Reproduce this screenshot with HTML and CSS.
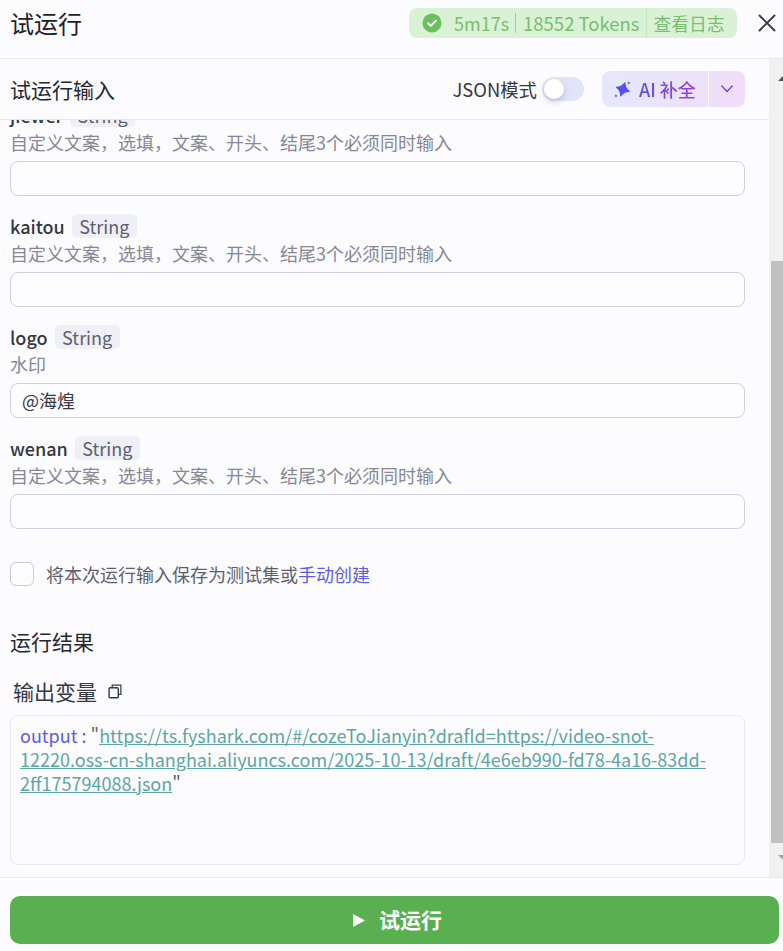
FILE: index.html
```html
<!DOCTYPE html>
<html lang="zh">
<head>
<meta charset="utf-8">
<title>试运行</title>
<link rel="stylesheet" href="styles.css">
</head>
<body>
<div class="panel">
  <header class="top">
    <h1 class="title">试运行</h1>
    <div class="status">
      <svg class="ok" viewBox="0 0 20 20" width="20" height="20"><circle cx="10" cy="10" r="9.500" fill="#6cbf5f"/><path d="M6 10.300l2.800 2.600L14 7.600" fill="none" stroke="#fff" stroke-width="2" stroke-linecap="round" stroke-linejoin="round"/></svg>
      <span class="time">5m17s</span><span class="tok">18552 Tokens</span><span class="log">查看日志</span>
    </div>
    <svg class="close" viewBox="0 0 18 18" width="18" height="18"><path d="M1.500 1.500l15 15M16.500 1.500l-15 15" fill="none" stroke="#353744" stroke-width="1.900" stroke-linecap="round"/></svg>
  </header>
  <div class="main">
    <div class="content">
      <div class="bar">
        <div class="bar-title">试运行输入</div>
        <span class="json">JSON模式</span>
        <span class="switch"><span class="knob"></span></span>
        <div class="ai">
          <span class="ai-main">
            <svg viewBox="0 0 17 17" width="17" height="17"><path d="M8.800 1.400Q10.500 6.600 15.700 8.300 10.500 10 8.800 15.200 7.100 10 1.900 8.300 7.100 6.600 8.800 1.400z" fill="#5a4fee" stroke="#5a4fee" stroke-width="1" stroke-linejoin="round" transform="rotate(18 8.800 8.300)"/><path d="M14.800 0c.2 1.200.7 1.700 1.900 1.900-1.200.2-1.700.7-1.900 1.900-.2-1.200-.7-1.700-1.900-1.900 1.200-.2 1.700-.7 1.900-1.900zM2 13c.2 1.100.7 1.600 1.900 1.900-1.200.2-1.700.7-1.900 1.900-.2-1.200-.7-1.700-1.900-1.900 1.200-.3 1.700-.8 1.900-1.900z" fill="#5a4fee"/></svg>
            <span class="ai-text">AI 补全</span>
          </span>
          <span class="ai-more"><svg viewBox="0 0 12 12" width="12" height="12"><path d="M.8 3l5.200 5.500L11.200 3" fill="none" stroke="#6c45e8" stroke-width="1.300" stroke-linecap="round" stroke-linejoin="round"/></svg></span>
        </div>
      </div>
      <div class="clip">
        <div class="scroll-inner">
          <div class="field">
            <div class="label"><b>jiewer</b><span class="tag">String</span></div>
            <div class="hint">自定义文案，选填，文案、开头、结尾3个必须同时输入</div>
            <div class="input"></div>
          </div>
          <div class="field">
            <div class="label"><b>kaitou</b><span class="tag">String</span></div>
            <div class="hint">自定义文案，选填，文案、开头、结尾3个必须同时输入</div>
            <div class="input"></div>
          </div>
          <div class="field">
            <div class="label"><b>logo</b><span class="tag">String</span></div>
            <div class="hint">水印</div>
            <div class="input">@海煌</div>
          </div>
          <div class="field">
            <div class="label"><b>wenan</b><span class="tag">String</span></div>
            <div class="hint">自定义文案，选填，文案、开头、结尾3个必须同时输入</div>
            <div class="input"></div>
          </div>
          <div class="save"><span class="check"></span><span>将本次运行输入保存为测试集或<a class="link">手动创建</a></span></div>
          <h2 class="result">运行结果</h2>
          <div class="out-head"><span>输出变量</span>
            <svg viewBox="0 0 14 15" width="14" height="15"><path d="M4.200 3.800V1.200h8.700v9.200h-2.600" fill="none" stroke="#353744" stroke-width="1.200"/><rect x="1.100" y="3.800" width="9.200" height="10" rx="1" fill="none" stroke="#353744" stroke-width="1.400"/></svg>
          </div>
          <div class="output"><span class="key">output :</span> "<a class="url">https://ts.fyshark.com/#/cozeToJianyin?drafId=https://video-snot-12220.oss-cn-shanghai.aliyuncs.com/2025-10-13/draft/4e6eb990-fd78-4a16-83dd-2ff175794088.json</a>"</div>
        </div>
      </div>
    </div>
    <div class="scrollbar">
      <span class="arrow up"></span>
      <div class="thumb"></div>
      <span class="arrow down"></span>
    </div>
  </div>
  <footer class="foot">
    <div class="run"><svg viewBox="0 0 12 13" width="12" height="13"><path d="M0 0l12 6.500L0 13z" fill="#fff"/></svg><span class="run-text">试运行</span></div>
  </footer>
</div>
</body>
</html>
```
FILE: styles.css
```css
* { box-sizing: border-box; }
html, body { margin: 0; height: 100%; }
body { background: #fcfcff; font-family: "Noto Sans CJK SC", "Noto Sans", sans-serif; color: #353744; overflow: hidden; }
.panel { width: 783px; height: 951px; display: flex; flex-direction: column; }
.top { height: 59px; flex: none; display: flex; align-items: center; padding: 0 7px 12px 10px; border-bottom: 1px solid #e7e6f0; }
.title { margin: 0; font-size: 24px; font-weight: 400; line-height: 32px; color: #1f2029; flex: 1; }
.status { display: flex; align-items: center; height: 30px; width: 328px; padding-left: 13px; background: #d9f2d6; border-radius: 8px; color: #7abd6f; font-size: 18px; line-height: 30px; white-space: nowrap; }
.ok { flex: none; margin-right: 12px; }
.time { padding-right: 6px; }
.tok { padding-left: 7px; padding-right: 6px; border-left: 1px solid #9ed097; line-height: 20px; font-size: 18.500px; }
.log { padding-left: 7px; border-left: 1px solid #c3e6bd; line-height: 30px; font-size: 17.800px; }
.close { margin-left: 21px; flex: none; }
.main { flex: 1; display: flex; min-height: 0; }
.content { flex: 1; min-width: 0; display: flex; flex-direction: column; }
.bar { height: 61px; flex: none; display: flex; align-items: center; padding: 0 24px 0 10px; border-bottom: 1px solid #e7e6f0; }
.bar-title { flex: 1; font-size: 21px; line-height: 30px; color: #262733; }
.json { font-size: 18.400px; color: #353744; }
.switch { width: 42px; height: 24px; border-radius: 12px; background: #e2e4f9; margin: 0 18px 0 5px; padding: 2px; }
.knob { display: block; width: 20px; height: 20px; border-radius: 50%; background: #fff; box-shadow: 0 3px 6px rgba(70,70,120,.25); }
.ai { display: flex; height: 36px; width: 143px; border-radius: 8px; overflow: hidden; background: linear-gradient(90deg, #e5e7fc, #f1defa); }
.ai-main { flex: 1; display: flex; align-items: center; padding-left: 12px; gap: 8px; border-right: 1px solid #fcfcff; }
.ai-text { font-size: 18px; font-weight: 500; white-space: nowrap; background: linear-gradient(90deg, #5a4fee, #9a3fe5); -webkit-background-clip: text; background-clip: text; color: transparent; }
.ai-more { width: 36px; display: flex; align-items: center; justify-content: center; }
.clip { flex: 1; min-height: 0; overflow: hidden; }
.scroll-inner { margin-top: -17px; padding: 0 24px 0 10px; }
.field { height: 111px; }
.label { display: flex; align-items: center; gap: 7px; height: 24px; font-size: 18px; line-height: 24px; }
.label b { font-weight: 500; color: #353744; }
.tag { font-size: 18px; color: #5d5f6e; background: #eff0f7; border-radius: 5px; padding: 0 7.500px; line-height: 24px; }
.hint { font-size: 18px; line-height: 22px; color: #868895; margin-top: 4px; white-space: nowrap; }
.input { height: 35px; margin-top: 8px; border: 1px solid #cfcfe0; border-radius: 8px; background: #fdfdff; font-size: 18px; line-height: 33px; padding-left: 11px; color: #353744; }
.save { display: flex; align-items: center; height: 24px; margin-top: 15px; font-size: 18px; color: #5d5f6e; gap: 12px; }
.check { width: 24px; height: 24px; border: 1px solid #c8c8dc; border-radius: 6px; flex: none; background: #fdfdff; }
.link { color: #5f5bea; }
.result { margin: 40px 0 0; font-size: 21px; font-weight: 400; line-height: 30px; color: #262733; }
.out-head { display: flex; align-items: center; gap: 11px; margin: 20px 0 0 3px; font-size: 21px; line-height: 30px; color: #353744; }
.output { height: 150px; margin-top: 9px; border: 1px solid #e8e7f2; border-radius: 8px; padding: 7px 9px; font-size: 18px; line-height: 24px; color: #5d5f6e; }
.key { color: #5f5bea; }
.url { color: #5ca6a4; text-decoration: underline; }
.scrollbar { width: 14px; flex: none; background: #f1f1f1; display: flex; flex-direction: column; overflow: hidden; }
.arrow { flex: none; width: 100%; position: relative; }
.up { height: 202px; }
.down { height: 34px; }
.arrow::after { content: ""; position: absolute; left: 9px; border-left: 5px solid transparent; border-right: 5px solid transparent; }
.up::after { top: 17px; border-bottom: 5px solid #505050; }
.down::after { bottom: 17px; border-top: 5px solid #a3a3a3; }
.thumb { flex: 1; margin-left: 2px; background: #c1c1c1; }
.foot { height: 74px; flex: none; border-top: 1px solid #e7e6f0; padding: 18px 4px 0 10px; }
.run { height: 48px; border-radius: 10px; background: #5aaf50; display: flex; align-items: center; justify-content: center; gap: 14px; padding-left: 6px; color: #fff; font-size: 21px; }
.run-text { font-weight: 600; line-height: 28px; margin-top: -2px; }
```
